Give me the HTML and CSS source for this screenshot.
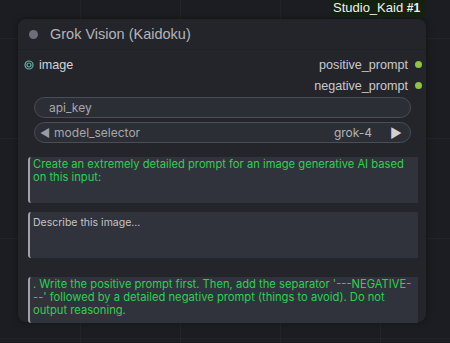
FILE: index.html
```html
<!DOCTYPE html>
<html lang="en">
<head>
    <meta charset="UTF-8">
    <meta name="viewport" content="width=device-width, initial-scale=1.0">
    <title>Grok Vision</title>
    <link rel="stylesheet" href="styles.css">
</head>
<body>
    <div class="badge">Studio_Kaid <span class="badge-num">#1</span></div>

    <div class="node">
        <div class="node-title">
            <span class="title-dot"></span>
            Grok Vision (Kaidoku)
        </div>

        <div class="slots">
            <div class="slot-row">
                <div class="slot-in">
                    <svg class="ring" width="10" height="10" viewBox="0 0 10 10">
                        <circle cx="5" cy="5" r="4" fill="none" stroke="#5fb3a4" stroke-width="1.2"/>
                        <circle cx="5" cy="5" r="2" fill="none" stroke="#5fb3a4" stroke-width="1.2"/>
                    </svg>
                    image
                </div>
                <div class="slot-out">positive_prompt <span class="out-dot"></span></div>
            </div>
            <div class="slot-row">
                <div class="slot-in"></div>
                <div class="slot-out">negative_prompt <span class="out-dot"></span></div>
            </div>
        </div>

        <div class="widget">
            <span class="widget-label">api_key</span>
        </div>
        <div class="widget combo">
            <span class="arrow">&#9664;</span>
            <span class="widget-label">model_selector</span>
            <span class="widget-value">grok-4</span>
            <span class="arrow">&#9654;</span>
        </div>

        <div class="textarea green">Create an extremely detailed prompt for an image generative AI based on this input:</div>
        <div class="textarea plain">Describe this image...</div>
        <div class="textarea green last">. Write the positive prompt first. Then, add the separator <span class="nowrap">'---NEGATIVE-</span><br>--' followed by a detailed negative prompt (things to avoid). Do not output reasoning.</div>
    </div>
</body>
</html>
```

FILE: styles.css
```css
body {
    margin: 0;
    height: 343px;
    overflow: hidden;
    background-color: #1b1d22;
    background-image:
        linear-gradient(90deg, rgba(255, 255, 255, 0.03) 1px, transparent 1px),
        linear-gradient(rgba(255, 255, 255, 0.03) 1px, transparent 1px);
    background-size: 100px 100px;
    background-position: 80px 0, 0 38px;
    font-family: "Liberation Sans", Arial, sans-serif;
    color: #c8c8c8;
    position: relative;
}

.badge {
    position: absolute;
    top: 0;
    left: 331px;
    height: 17px;
    padding: 0 6px 0 2px;
    background: #15210f;
    border-radius: 0 0 4px 4px;
    color: #f0f0f0;
    font-size: 13px;
    line-height: 15px;
}

.badge-num {
    font-weight: bold;
    font-size: 12px;
}

.node {
    margin: 19px 0 0 18px;
    width: 408px;
    height: 303px;
    background: #23252b;
    border-radius: 8px;
    box-shadow: 0 0 6px rgba(0, 0, 0, 0.4);
}

.node-title {
    height: 30px;
    display: flex;
    align-items: center;
    padding-left: 11px;
    font-size: 14.5px;
    color: #b4b4b8;
    border-bottom: 1px solid #1f2126;
}

.title-dot {
    width: 9px;
    height: 9px;
    border-radius: 50%;
    background: #6c6f78;
    margin-right: 12px;
}

.slots {
    padding: 4px 0 1px;
}

.slot-row {
    height: 21px;
    display: flex;
    justify-content: space-between;
    align-items: center;
    font-size: 12.6px;
}

.slot-in {
    display: flex;
    align-items: center;
    padding-left: 6px;
    color: #d4d4d6;
}

.ring {
    margin-right: 5px;
}

.slot-out {
    display: flex;
    align-items: center;
    color: #c9c9cc;
}

.out-dot {
    width: 7px;
    height: 7px;
    border-radius: 50%;
    background: #8cc63f;
    margin: 0 4px 0 7px;
}

.widget {
    margin: 0 15px 4px 16px;
    height: 19px;
    border: 1px solid #4b4e56;
    border-radius: 11px;
    background: #2b2e35;
    display: flex;
    align-items: center;
    padding: 0 8px 0 14px;
    font-family: "Inter", "Liberation Sans", sans-serif;
    font-size: 12px;
    color: #a8a8ac;
}

.widget.combo {
    padding-left: 5px;
    margin-bottom: 14px;
}

.widget-label {
    flex: 1;
}

.widget-value {
    margin-right: 18px;
    color: #b4b4b8;
}

.arrow {
    font-size: 11px;
    color: #9c9ca0;
    margin-right: 4px;
}

.combo .arrow:last-child {
    margin-right: 0;
    color: #d0d0d4;
    font-size: 13px;
}

.textarea {
    margin-left: 10px;
    width: 381px;
    height: 45px;
    padding: 1px 4px 0 3px;
    background: #30333b;
    border-left: 2px solid #a0a2a6;
    border-radius: 3px 0 0 3px;
    font-family: "Inter", "Liberation Sans", sans-serif;
    font-size: 11.2px;
    line-height: 13px;
    margin-bottom: 9px;
}

.textarea.green {
    color: #2ed052;
}

.textarea.plain {
    height: 42px;
    padding-top: 4px;
    font-size: 10.5px;
    color: #c4c4c8;
    margin-bottom: 19px;
}

.textarea.last {
    padding-top: 1px;
}

.nowrap {
    white-space: nowrap;
}
```
